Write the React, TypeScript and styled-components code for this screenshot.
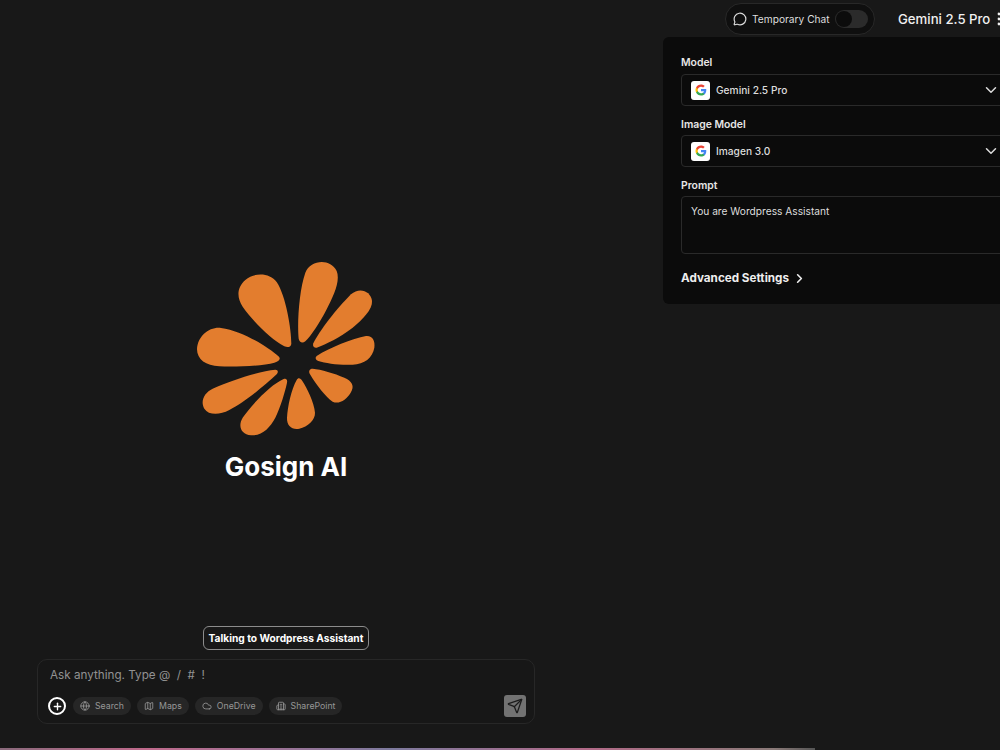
import { createGlobalStyle, styled } from 'styled-components'
import { ChevronDown, ChevronRight, Cloud, Globe, Map, MessageCircle, Plus, Send, Building2 } from 'lucide-react'

const GlobalStyle = createGlobalStyle`
  html, body {
    margin: 0;
    height: 100%;
    background: #181818;
    font-family: Inter, "Liberation Sans", sans-serif;
    color: #fff;
  }
`

const Page = styled.div`
  width: 1000px;
  height: 750px;
  overflow: hidden;
  display: flex;
  flex-direction: column;
  background: #181818;
`

const Columns = styled.div`
  flex: 1;
  min-height: 0;
  display: flex;
`

const Main = styled.main`
  width: 572px;
  display: flex;
  flex-direction: column;
  align-items: center;
`

const Hero = styled.div`
  flex: 1;
  display: flex;
  flex-direction: column;
  align-items: center;
  padding-top: 261px;
`

const LogoMark = styled.svg`
  display: block;
  width: 180px;
  height: 175px;
`

const Petal = styled.path`
  fill: #e37d2e;
`

const Brand = styled.h1`
  margin: 13px 0 0;
  font-size: 26px;
  line-height: 36px;
  font-weight: 700;
  color: #fff;
`

const AssistantTag = styled.div`
  box-sizing: border-box;
  height: 24px;
  margin-bottom: 9px;
  padding: 0 4.5px;
  display: flex;
  align-items: center;
  border: 1px solid #8c8c8c;
  border-radius: 6px;
  font-size: 10.2px;
  font-weight: 700;
  color: #fff;
`

const Composer = styled.div`
  box-sizing: border-box;
  width: 498px;
  height: 65px;
  margin-bottom: 24px;
  padding: 6px 8px 0 12px;
  border: 1px solid #272727;
  border-radius: 10px;
  display: flex;
  flex-direction: column;
  background: #171717;
`

const Placeholder = styled.div`
  font-size: 11.7px;
  line-height: 18px;
  color: #929292;
`

const ComposerTools = styled.div`
  margin-top: 11px;
  height: 22px;
  display: flex;
  align-items: center;
  gap: 6px;
`

const AddButton = styled.span`
  width: 18px;
  height: 18px;
  margin: 0 1px 0 -2px;
  box-sizing: border-box;
  border: 2px solid #fff;
  border-radius: 50%;
  display: flex;
  align-items: center;
  justify-content: center;
  color: #fff;
`

const ToolChip = styled.span`
  height: 18px;
  padding: 0 7px;
  display: flex;
  align-items: center;
  gap: 5px;
  border-radius: 9px;
  background: #262626;
  font-size: 8.75px;
  color: #979797;
`

const SendButton = styled.span`
  width: 22px;
  height: 22px;
  margin-left: auto;
  border-radius: 3px;
  background: #727272;
  display: flex;
  align-items: center;
  justify-content: center;
  color: #1c1c1c;
`

const Side = styled.aside`
  flex: 1;
  min-width: 0;
  position: relative;
`

const TopBar = styled.header`
  height: 37px;
  padding-left: 153px;
  display: flex;
  align-items: center;
  white-space: nowrap;
`

const TempChat = styled.div`
  flex: none;
  box-sizing: border-box;
  width: 150px;
  height: 32px;
  padding: 0 6px 0 7px;
  display: flex;
  align-items: center;
  border: 1px solid #282828;
  border-radius: 16px;
  background: #0f0f0f;
  font-size: 10.2px;
  color: #ddd;
`

const TempLabel = styled.span`
  margin-left: 5px;
`

const Toggle = styled.span`
  width: 33px;
  height: 18px;
  margin-left: auto;
  box-sizing: border-box;
  padding: 1px;
  border-radius: 9px;
  background: #2b2b2b;
  display: flex;
`

const ToggleKnob = styled.span`
  width: 16px;
  height: 16px;
  border-radius: 50%;
  background: #0c0c0c;
`

const ModelName = styled.span`
  flex: none;
  margin-left: 23px;
  font-size: 13.2px;
  font-weight: 500;
  color: #f0f0f0;
`

const Kebab = styled.svg`
  flex: none;
  margin-left: 5px;
  width: 10px;
  height: 14px;
`

const SettingsPanel = styled.section`
  position: absolute;
  top: 37px;
  left: 91px;
  box-sizing: border-box;
  width: 364px;
  height: 267px;
  padding: 19px 18px;
  border-radius: 6px;
  background: #0b0b0b;
`

const FieldLabel = styled.div<{ $first?: boolean }>`
  height: 14px;
  margin-top: ${p => (p.$first ? '0' : '12px')};
  margin-bottom: ${p => (p.$first ? '4px' : '3px')};
  font-size: 10.4px;
  line-height: 14px;
  font-weight: 600;
  color: #e6e6e6;
`

const Select = styled.div`
  box-sizing: border-box;
  height: 32px;
  padding: 0 8px 0 9px;
  display: flex;
  align-items: center;
  justify-content: space-between;
  border: 1px solid #2a2a2a;
  border-radius: 4px;
  font-size: 10.2px;
  font-weight: 500;
  color: #ddd;
`

const SelectValue = styled.span`
  display: flex;
  align-items: center;
  gap: 6px;
`

const ProviderBadge = styled.span`
  width: 19px;
  height: 19px;
  border-radius: 3px;
  background: #fff;
  display: flex;
  align-items: center;
  justify-content: center;
`

const PromptBox = styled.div`
  box-sizing: border-box;
  height: 58px;
  padding: 7px 9px;
  border: 1px solid #2a2a2a;
  border-radius: 4px;
  font-size: 10.2px;
  line-height: 14px;
  color: #ddd;
`

const AdvancedRow = styled.div`
  margin-top: 15px;
  display: flex;
  align-items: center;
  gap: 3px;
  font-size: 11.7px;
  line-height: 18px;
  font-weight: 700;
  color: #eee;
`

const GlowLine = styled.div`
  flex: none;
  width: 815px;
  height: 2px;
  background: linear-gradient(90deg, #8a6a7c 0%, #c06a8c 18%, #7d7a9e 48%, #b26a88 72%, #8a7a78 95%, #555 100%);
`

const petals = [
  'M316 283C316 240 300 140 272 98C252 70 205 68 178 92C152 115 152 145 170 172C200 215 255 270 295 291C307 296 315 292 316 283Z',
  'M338 268C333 220 340 120 358 70C373 32 432 25 452 65C464 95 442 140 422 180C402 220 375 260 358 276C349 283 340 279 338 268Z',
  'M382 282C400 245 450 180 495 135C520 112 555 125 558 155C560 180 530 210 500 235C465 262 420 285 392 295C383 297 379 290 382 282Z',
  'M392 320C430 295 500 268 540 260C560 258 568 275 565 295C560 325 535 345 500 346C460 348 420 342 397 335C388 331 387 325 392 320Z',
  'M279 322C245 292 170 245 105 236C70 232 35 260 33 300C33 330 60 350 100 351C150 353 230 350 265 340C281 335 284 329 279 322Z',
  'M268 361C220 365 130 395 80 418C55 430 42 455 55 478C68 498 100 498 130 482C175 460 240 405 272 375C278 368 276 361 268 361Z',
  'M293 389C255 405 198 465 170 505C155 530 165 556 195 558C228 560 252 535 268 505C283 475 298 425 303 400C305 390 300 386 293 389Z',
  'M332 392C316 420 305 470 303 505C302 530 318 542 340 538C365 532 388 512 387 490C385 460 362 415 349 395C343 385 336 385 332 392Z',
  'M372 375C390 405 420 445 440 457C460 466 482 450 494 430C507 410 498 395 475 385C445 372 405 360 380 358C370 358 367 366 372 375Z',
]

const GoogleMark = () => (
  <svg width="12" height="12" viewBox="0 0 24 24">
    <path fill="#4285F4" d="M22.56 12.25c0-.78-.07-1.53-.2-2.25H12v4.26h5.92c-.26 1.37-1.04 2.53-2.21 3.31v2.77h3.57c2.08-1.92 3.28-4.74 3.28-8.09z" />
    <path fill="#34A853" d="M12 23c2.97 0 5.46-.98 7.28-2.66l-3.57-2.77c-.98.66-2.23 1.06-3.71 1.06-2.86 0-5.29-1.93-6.16-4.53H2.18v2.84C3.99 20.53 7.7 23 12 23z" />
    <path fill="#FBBC05" d="M5.84 14.09c-.22-.66-.35-1.36-.35-2.09s.13-1.43.35-2.09V7.07H2.18C1.43 8.55 1 10.22 1 12s.43 3.45 1.18 4.93l3.66-2.84z" />
    <path fill="#EA4335" d="M12 5.38c1.62 0 3.06.56 4.21 1.64l3.15-3.15C17.45 2.09 14.97 1 12 1 7.7 1 3.99 3.47 2.18 7.07l3.66 2.84c.87-2.6 3.3-4.53 6.16-4.53z" />
  </svg>
)

const tools = [
  { label: 'Search', Icon: Globe },
  { label: 'Maps', Icon: Map },
  { label: 'OneDrive', Icon: Cloud },
  { label: 'SharePoint', Icon: Building2 },
]

const models = [
  { label: 'Model', value: 'Gemini 2.5 Pro' },
  { label: 'Image Model', value: 'Imagen 3.0' },
]

export default function App() {
  return (
    <Page>
      <GlobalStyle />
      <Columns>
        <Main>
          <Hero>
            <LogoMark viewBox="30 35 540 525">
              {petals.map(d => (
                <Petal key={d} d={d} />
              ))}
            </LogoMark>
            <Brand>Gosign AI</Brand>
          </Hero>
          <AssistantTag>Talking to Wordpress Assistant</AssistantTag>
          <Composer>
            <Placeholder>Ask anything. Type @{'\u00a0 '}/{'\u00a0 '}#{'\u00a0 '}!</Placeholder>
            <ComposerTools>
              <AddButton>
                <Plus size={11} strokeWidth={3} />
              </AddButton>
              {tools.map(({ label, Icon }) => (
                <ToolChip key={label}>
                  <Icon size={10} />
                  {label}
                </ToolChip>
              ))}
              <SendButton>
                <Send size={16} strokeWidth={1.9} />
              </SendButton>
            </ComposerTools>
          </Composer>
        </Main>
        <Side>
          <TopBar>
            <TempChat>
              <MessageCircle size={14} />
              <TempLabel>Temporary Chat</TempLabel>
              <Toggle>
                <ToggleKnob />
              </Toggle>
            </TempChat>
            <ModelName>Gemini 2.5 Pro</ModelName>
            <Kebab viewBox="0 0 10 14">
              <circle cx="4" cy="2" r="1.4" fill="#eee" />
              <circle cx="4" cy="7" r="1.4" fill="#eee" />
              <circle cx="4" cy="12" r="1.4" fill="#eee" />
            </Kebab>
          </TopBar>
          <SettingsPanel>
            {models.map((m, i) => (
              <div key={m.label}>
                <FieldLabel $first={i === 0}>{m.label}</FieldLabel>
                <Select>
                  <SelectValue>
                    <ProviderBadge>
                      <GoogleMark />
                    </ProviderBadge>
                    {m.value}
                  </SelectValue>
                  <ChevronDown size={18} />
                </Select>
              </div>
            ))}
            <FieldLabel>Prompt</FieldLabel>
            <PromptBox>You are Wordpress Assistant</PromptBox>
            <AdvancedRow>
              Advanced Settings
              <ChevronRight size={15} strokeWidth={2.6} />
            </AdvancedRow>
          </SettingsPanel>
        </Side>
      </Columns>
      <GlowLine />
    </Page>
  )
}
